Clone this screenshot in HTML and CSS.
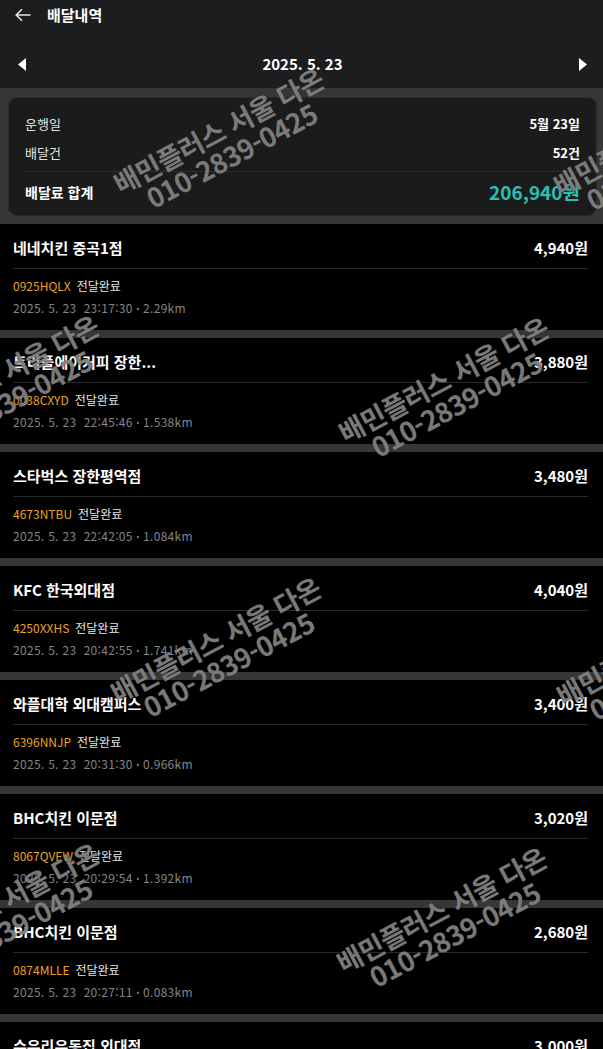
FILE: index.html
```html
<!DOCTYPE html>
<html lang="ko">
<head>
<meta charset="utf-8">
<title>배달내역</title>
<link rel="stylesheet" href="styles.css">
</head>
<body>
<header class="header">
  <div class="topbar">
    <svg class="back" viewBox="0 0 16 14" width="16" height="14"><path d="M15.5 7H1.2M7 1.2L1.2 7L7 12.8" fill="none" stroke="#e6e6e6" stroke-width="1.6"/></svg>
    <h1 class="title">배달내역</h1>
  </div>
  <div class="datebar">
    <svg class="tri" viewBox="0 0 8 13" width="8" height="13"><path d="M8 0V13L0 6.5Z" fill="#fff"/></svg>
    <div class="date">2025. 5. 23</div>
    <svg class="tri" viewBox="0 0 8 13" width="8" height="13"><path d="M0 0V13L8 6.5Z" fill="#fff"/></svg>
  </div>
</header>

<section class="summary">
  <div class="card">
    <div class="srow"><span class="slabel">운행일</span><span class="sval">5월 23일</span></div>
    <div class="srow"><span class="slabel">배달건</span><span class="sval">52건</span></div>
    <div class="stotal"><span class="tlabel">배달료 합계</span><span class="tval">206,940원</span></div>
  </div>
</section>

<main class="list">
  <article class="item">
    <div class="ihead"><span class="iname">네네치킨 중곡1점</span><span class="iprice">4,940원</span></div>
    <div class="icode"><span class="code">0925HQLX</span>전달완료</div>
    <div class="imeta">2025. 5. 23  23:17:30 <span class="dot">•</span> 2.29km</div>
  </article>
  <article class="item">
    <div class="ihead"><span class="iname">트리플에이커피 장한...</span><span class="iprice">3,880원</span></div>
    <div class="icode"><span class="code">0038CXYD</span>전달완료</div>
    <div class="imeta">2025. 5. 23  22:45:46 <span class="dot">•</span> 1.538km</div>
  </article>
  <article class="item">
    <div class="ihead"><span class="iname">스타벅스 장한평역점</span><span class="iprice">3,480원</span></div>
    <div class="icode"><span class="code">4673NTBU</span>전달완료</div>
    <div class="imeta">2025. 5. 23  22:42:05 <span class="dot">•</span> 1.084km</div>
  </article>
  <article class="item">
    <div class="ihead"><span class="iname">KFC 한국외대점</span><span class="iprice">4,040원</span></div>
    <div class="icode"><span class="code">4250XXHS</span>전달완료</div>
    <div class="imeta">2025. 5. 23  20:42:55 <span class="dot">•</span> 1.741km</div>
  </article>
  <article class="item">
    <div class="ihead"><span class="iname">와플대학 외대캠퍼스</span><span class="iprice">3,400원</span></div>
    <div class="icode"><span class="code">6396NNJP</span>전달완료</div>
    <div class="imeta">2025. 5. 23  20:31:30 <span class="dot">•</span> 0.966km</div>
  </article>
  <article class="item">
    <div class="ihead"><span class="iname">BHC치킨 이문점</span><span class="iprice">3,020원</span></div>
    <div class="icode"><span class="code">8067QVEW</span>전달완료</div>
    <div class="imeta">2025. 5. 23  20:29:54 <span class="dot">•</span> 1.392km</div>
  </article>
  <article class="item">
    <div class="ihead"><span class="iname">BHC치킨 이문점</span><span class="iprice">2,680원</span></div>
    <div class="icode"><span class="code">0874MLLE</span>전달완료</div>
    <div class="imeta">2025. 5. 23  20:27:11 <span class="dot">•</span> 0.083km</div>
  </article>
  <article class="item">
    <div class="ihead"><span class="iname">수유리우동집 외대점</span><span class="iprice">3,000원</span></div>
  </article>
</main>

<div class="watermarks" aria-hidden="true">
  <div class="wm wm-a">배민플러스 서울 다온<br>010-2839-0425</div>
  <div class="wm wm-b">배민플러스 서울 다온<br>010-2839-0425</div>
  <div class="wm wm-c">배민플러스 서울 다온<br>010-2839-0425</div>
  <div class="wm wm-d">배민플러스 서울 다온<br>010-2839-0425</div>
  <div class="wm wm-e">배민플러스 서울 다온<br>010-2839-0425</div>
  <div class="wm wm-f">배민플러스 서울 다온<br>010-2839-0425</div>
  <div class="wm wm-g">배민플러스 서울 다온<br>010-2839-0425</div>
  <div class="wm wm-h">배민플러스 서울 다온<br>010-2839-0425</div>
</div>
</body>
</html>
```

FILE: styles.css
```css
* { box-sizing: border-box; margin: 0; padding: 0; }
html, body { background: #000; }
body {
  width: 603px;
  height: 1049px;
  overflow: hidden;
  position: relative;
  font-family: "Noto Sans CJK KR", "Noto Sans", sans-serif;
  color: #fff;
}

/* header */
.header { background: #1c1d1f; }
.topbar { height: 30px; display: flex; align-items: center; padding-left: 15px; }
.back { display: block; margin-right: 16px; }
.title { font-size: 15px; font-weight: 700; line-height: 30px; }
.datebar {
  height: 58px;
  display: flex;
  align-items: center;
  justify-content: space-between;
  padding: 10px 16px 0 18px;
}
.tri { display: block; }
.date { font-size: 15px; font-weight: 700; line-height: 22px; }

/* summary */
.summary { background: #363636; padding: 9px 6px 8px 8px; }
.card {
  background: #1b1b1b;
  border: 1px solid #2b2b2b;
  border-radius: 9px;
  padding: 16px 16px 10px;
}
.srow {
  display: flex;
  justify-content: space-between;
  font-size: 13px;
  line-height: 20px;
}
.srow + .srow { margin-top: 9px; }
.slabel { color: #e2e2e2; }
.sval { font-weight: 700; }
.stotal {
  margin-top: 8px;
  border-top: 1px solid #2e2e2e;
  padding-top: 7px;
  display: flex;
  justify-content: space-between;
  align-items: center;
  line-height: 26px;
}
.tlabel { font-size: 14px; font-weight: 700; }
.tval { font-size: 19px; font-weight: 700; color: #2bbfb6; }

/* list */
.list { background: #363636; display: flex; flex-direction: column; gap: 8px; }
.item { background: #000; height: 106px; flex: none; padding: 14px 15px 13px 13px; }
.ihead {
  display: flex;
  justify-content: space-between;
  line-height: 20px;
  padding-bottom: 10px;
  border-bottom: 1px solid #2a2a2a;
  font-size: 15px;
  font-weight: 700;
}
.icode { margin-top: 8px; font-size: 12px; line-height: 18px; color: #e6e6e6; }
.code { color: #eaa322; margin-right: 6px; }
.imeta {
  margin-top: 4px;
  font-size: 12px;
  line-height: 18px;
  color: #858585;
  white-space: pre;
  letter-spacing: 0.3px;
}
.dot { font-size: 8px; vertical-align: 2px; }

/* watermark overlay */
.watermarks { position: absolute; inset: 0; pointer-events: none; overflow: hidden; }
.wm {
  position: absolute;
  width: 340px;
  margin-left: -170px;
  margin-top: -28px;
  text-align: center;
  font-size: 27px;
  line-height: 28px;
  font-weight: 700;
  letter-spacing: -0.5px;
  color: rgba(175, 175, 175, 0.6);
  text-shadow: 0 0 1px rgba(50, 50, 50, 0.9);
  transform: rotate(-28deg);
  white-space: nowrap;
}
.wm-a { left: 225px; top: 143px; }
.wm-b { left: 665px; top: 145px; }
.wm-c { left: 450px; top: 392px; }
.wm-d { left: 0; top: 390px; }
.wm-e { left: 222px; top: 652px; }
.wm-f { left: 668px; top: 655px; }
.wm-g { left: 0; top: 918px; }
.wm-h { left: 448px; top: 922px; }
```
